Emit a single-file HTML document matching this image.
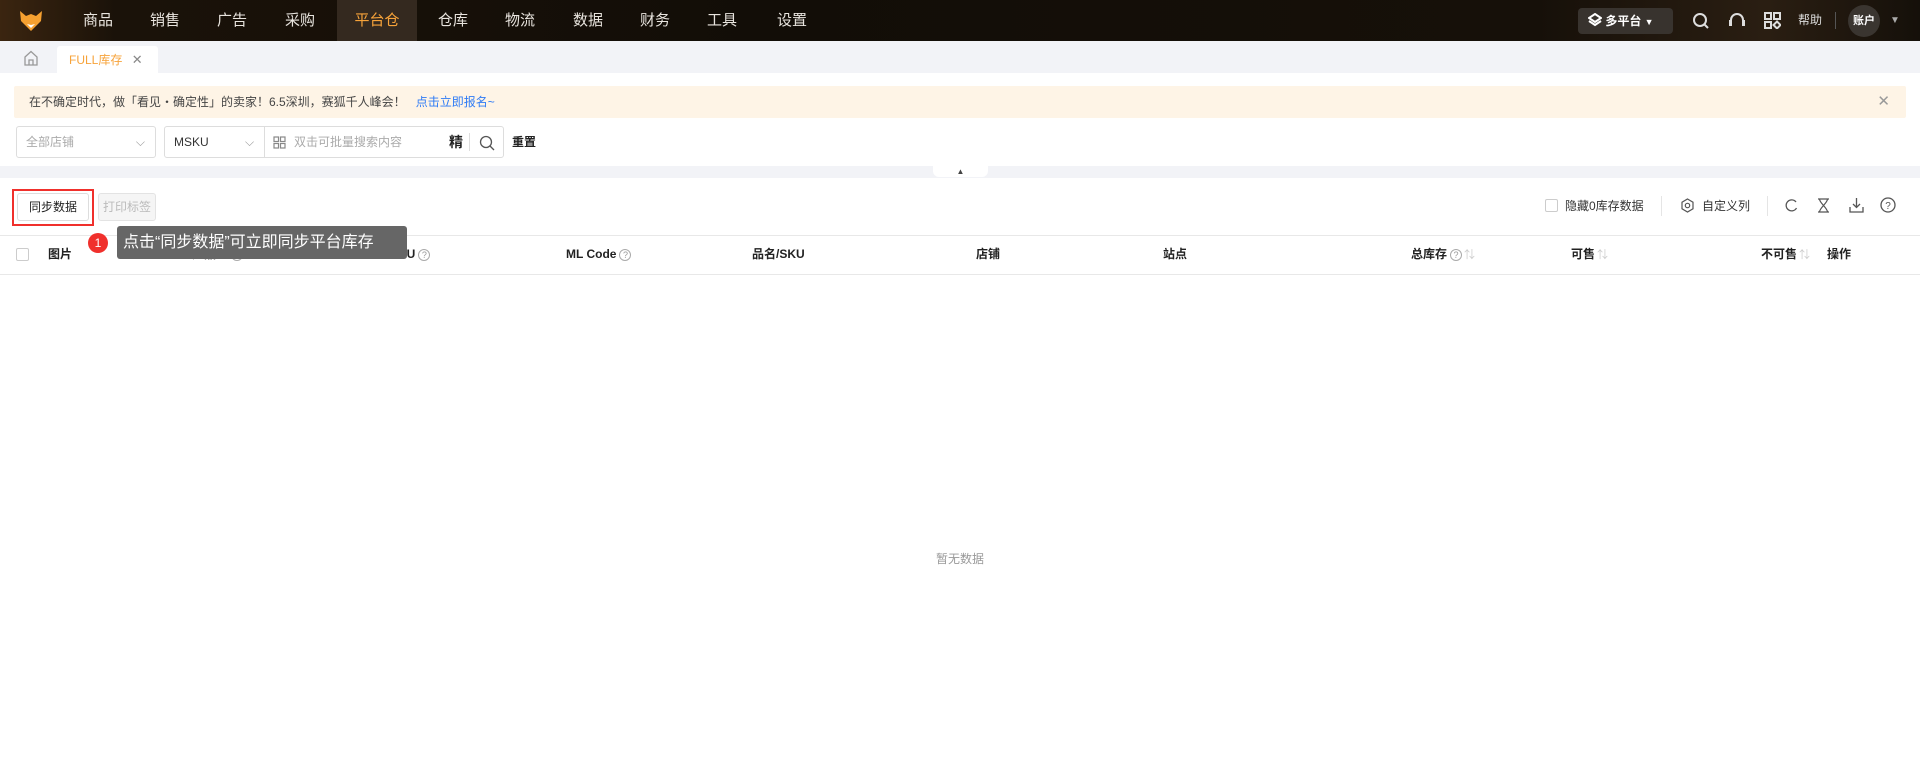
<!DOCTYPE html>
<html><head><meta charset="utf-8"><style>
*{box-sizing:border-box;margin:0;padding:0}
body{width:1920px;height:767px;background:#fff;font-family:"Liberation Sans","Noto Sans CJK SC",sans-serif;position:relative;overflow:hidden;color:#222}
.abs{position:absolute}
.nav{left:0;top:0;width:1920px;height:41px;background:linear-gradient(90deg,#3b2510 0%,#1a1209 6%,#120d07 40%,#161009 80%,#2a1e12 92%,#15100a 100%)}
.nav .it{position:absolute;top:0;height:41px;line-height:41px;color:#e8e4de;font-size:15px;transform:translateX(-50%)}
.tabbar{left:0;top:41px;width:1920px;height:32px;background:#f2f3f7}
.hd{font-size:12px;font-weight:bold;color:#222;top:246px;line-height:16px;white-space:nowrap}
.q{display:inline-block;width:12px;height:12px;border:1px solid #aaa;border-radius:50%;font-size:9px;line-height:10px;text-align:center;color:#999;font-weight:normal;vertical-align:middle;margin-left:3px}
.s{color:#ccc;font-weight:normal;font-size:11px;margin-left:2px}
</style></head><body>
<div class="abs nav">
 <svg class="abs" style="left:19px;top:10px" width="24" height="22" viewBox="0 0 24 22"><path d="M1 1 L7 6 L12 4 L17 6 L23 1 L22 11 L12 21 L2 11Z" fill="#f5a030"/><path d="M8 14 L12 18 L16 14 L12 15Z" fill="#fff"/></svg>
 <div class="it" style="left:98px">商品</div><div class="it" style="left:165px">销售</div><div class="it" style="left:232px">广告</div><div class="it" style="left:300px">采购</div>
 <div class="abs" style="left:337px;top:0;width:80px;height:41px;background:#34291f"></div>
 <div class="it" style="left:377px;color:#f7a33a">平台仓</div>
 <div class="it" style="left:453px">仓库</div><div class="it" style="left:520px">物流</div><div class="it" style="left:588px">数据</div><div class="it" style="left:655px">财务</div><div class="it" style="left:722px">工具</div><div class="it" style="left:792px">设置</div>
 <div class="abs" style="left:1578px;top:8px;width:95px;height:26px;background:#38332e;border-radius:4px;color:#fff;font-size:12px;font-weight:bold;line-height:26px;padding-left:10px">
  <svg width="14" height="14" viewBox="0 0 14 14" style="vertical-align:-2px"><path d="M7 1L13 5 7 9 1 5Z M1 8 L7 12 13 8" fill="none" stroke="#fff" stroke-width="2"/></svg>&nbsp;多平台&nbsp;<span style="font-size:9px">▼</span></div>
 <svg class="abs" style="left:1692px;top:12px" width="18" height="18" viewBox="0 0 18 18"><circle cx="8" cy="8" r="6" fill="none" stroke="#ddd" stroke-width="2"/><path d="M12.5 12.5L16 16" stroke="#ddd" stroke-width="2"/></svg>
 <svg class="abs" style="left:1728px;top:11px" width="18" height="20" viewBox="0 0 18 20"><path d="M3 12V9a6 6 0 0 1 12 0v3" fill="none" stroke="#ddd" stroke-width="2"/><rect x="1" y="9" width="3" height="6" fill="#ddd"/><rect x="14" y="9" width="3" height="6" fill="#ddd"/></svg>
 <svg class="abs" style="left:1764px;top:12px" width="17" height="17" viewBox="0 0 17 17"><g fill="none" stroke="#ddd" stroke-width="2"><rect x="1" y="1" width="6" height="6"/><rect x="10" y="1" width="6" height="6"/><rect x="1" y="10" width="6" height="6"/><path d="M13 9.5L16.5 13 13 16.5 9.5 13Z"/></g></svg>
 <div class="abs" style="left:1798px;top:0;line-height:41px;color:#ddd;font-size:12px">帮助</div>
 <div class="abs" style="left:1835px;top:12px;width:1px;height:17px;background:#555"></div>
 <div class="abs" style="left:1848px;top:5px;width:32px;height:32px;border-radius:50%;background:#3a3530;color:#fff;font-size:11px;font-weight:bold;line-height:32px;text-align:center">账户</div>
 <div class="abs" style="left:1890px;top:0;line-height:41px;color:#aaa;font-size:10px">▼</div>
</div>
<div class="abs tabbar">
 <svg class="abs" style="left:23px;top:9px" width="16" height="16" viewBox="0 0 16 16"><path d="M2 7L8 1.5 14 7V15H2Z M6 15V10H10V15" fill="none" stroke="#999" stroke-width="1.3"/></svg>
 <div class="abs" style="left:57px;top:5px;width:101px;height:27px;background:#fff;border-radius:3px 3px 0 0;font-size:12px;color:#f7a33a;line-height:27px;padding-left:12px">FULL库存 <span style="color:#888;margin-left:6px;font-size:13px">✕</span></div>
</div>
<div class="abs" style="left:14px;top:86px;width:1892px;height:32px;background:#fef4e6;border-radius:2px;font-size:12px;line-height:32px;padding-left:15px;color:#444">在不确定时代，做「看见・确定性」的卖家！6.5深圳，赛狐千人峰会！&nbsp;&nbsp;&nbsp;<span style="color:#2f7bf5">点击立即报名~</span>
 <span style="position:absolute;right:16px;top:0;color:#999;font-size:15px">✕</span></div>
<div class="abs" style="left:16px;top:126px;width:140px;height:32px;border:1px solid #ddd;border-radius:3px;font-size:12px;color:#aaa;line-height:30px;padding-left:9px">全部店铺<span style="position:absolute;right:10px;color:#999">⌵</span></div>
<div class="abs" style="left:164px;top:126px;width:340px;height:32px;border:1px solid #ddd;border-radius:3px;font-size:12px;line-height:30px">
 <span style="position:absolute;left:9px;color:#333">MSKU</span><span style="position:absolute;left:80px;color:#999">⌵</span>
 <div class="abs" style="left:99px;top:0;width:1px;height:30px;background:#ddd"></div>
 <svg class="abs" style="left:108px;top:9px" width="13" height="13" viewBox="0 0 13 13"><g fill="none" stroke="#888" stroke-width="1.2"><rect x="1" y="1" width="4.5" height="4.5"/><rect x="7.5" y="1" width="4.5" height="4.5"/><rect x="1" y="7.5" width="4.5" height="4.5"/><rect x="7.5" y="7.5" width="4.5" height="4.5"/></g></svg>
 <span style="position:absolute;left:129px;color:#aaa">双击可批量搜索内容</span>
 <span style="position:absolute;left:284px;color:#222;font-size:14px;font-weight:bold">精</span>
 <div class="abs" style="left:304px;top:6px;width:1px;height:18px;background:#ddd"></div>
 <svg class="abs" style="left:314px;top:8px" width="16" height="16" viewBox="0 0 16 16"><circle cx="7" cy="7" r="5.5" fill="none" stroke="#555" stroke-width="1.3"/><path d="M11 11L15 15" stroke="#555" stroke-width="1.3"/></svg>
</div>
<div class="abs" style="left:512px;top:126px;line-height:32px;font-size:12px;font-weight:bold">重置</div>
<div class="abs" style="left:0;top:166px;width:1920px;height:12px;background:#f2f3f7"></div>
<div class="abs" style="left:933px;top:166px;width:55px;height:11px;background:#fff;border-radius:0 0 6px 6px;text-align:center;font-size:8px;line-height:11px;color:#444">▲</div>
<div class="abs" style="left:12px;top:189px;width:82px;height:37px;border:2px solid #f0302c"></div>
<div class="abs" style="left:17px;top:193px;width:72px;height:28px;border:1px solid #ddd;border-radius:3px;font-size:12px;line-height:26px;text-align:center">同步数据</div>
<div class="abs" style="left:98px;top:193px;width:58px;height:28px;border:1px solid #e3e3e3;background:#f5f5f5;border-radius:3px;font-size:12px;line-height:26px;text-align:center;color:#bbb">打印标签</div>
<div class="abs" style="left:1545px;top:199px;width:13px;height:13px;border:1px solid #ccc;border-radius:2px"></div>
<div class="abs" style="left:1565px;top:197px;font-size:12px;color:#333">隐藏0库存数据</div>
<div class="abs" style="left:1661px;top:196px;width:1px;height:20px;background:#e5e5e5"></div>
<svg class="abs" style="left:1680px;top:198px" width="15" height="15" viewBox="0 0 15 15"><path d="M7.5 1L13 4.2V10.8L7.5 14 2 10.8V4.2Z" fill="none" stroke="#555" stroke-width="1.2"/><circle cx="7.5" cy="7.5" r="2.2" fill="none" stroke="#555" stroke-width="1.2"/></svg>
<div class="abs" style="left:1702px;top:197px;font-size:12px;color:#333">自定义列</div>
<div class="abs" style="left:1767px;top:196px;width:1px;height:20px;background:#e5e5e5"></div>
<svg class="abs" style="left:1784px;top:198px" width="15" height="15" viewBox="0 0 15 15"><path d="M12 4A5.5 5.5 0 1 0 12.5 10" fill="none" stroke="#555" stroke-width="1.3"/></svg>
<svg class="abs" style="left:1817px;top:198px" width="13" height="15" viewBox="0 0 13 15"><path d="M1 1H12M1 14H12M2.5 1C2.5 5 10.5 10 10.5 14M10.5 1C10.5 5 2.5 10 2.5 14" fill="none" stroke="#555" stroke-width="1.2"/></svg>
<svg class="abs" style="left:1849px;top:197px" width="15" height="16" viewBox="0 0 15 16"><path d="M7.5 1V10M4 7L7.5 10.5 11 7M1 10V15H14V10" fill="none" stroke="#555" stroke-width="1.3"/></svg>
<svg class="abs" style="left:1880px;top:197px" width="16" height="16" viewBox="0 0 16 16"><circle cx="8" cy="8" r="7" fill="none" stroke="#555" stroke-width="1.3"/><text x="8" y="12" font-size="10" text-anchor="middle" fill="#555" font-family="Liberation Sans">?</text></svg>
<div class="abs" style="left:0;top:235px;width:1920px;height:1px;background:#e8e8e8"></div>
<div class="abs" style="left:0;top:274px;width:1920px;height:1px;background:#e8e8e8"></div>
<div class="abs" style="left:16px;top:248px;width:13px;height:13px;border:1px solid #ccc;border-radius:2px"></div>
<div class="abs hd" style="left:48px">图片</div>
<div class="abs hd" style="left:192px">产品ID<span class="q">?</span></div>
<div class="abs hd" style="left:380px">MSKU<span class="q">?</span></div>
<div class="abs hd" style="left:566px">ML Code<span class="q">?</span></div>
<div class="abs hd" style="left:752px">品名/SKU</div>
<div class="abs hd" style="left:976px">店铺</div>
<div class="abs hd" style="left:1163px">站点</div>
<div class="abs hd" style="left:1411px">总库存<span class="q">?</span><span class="s">⇅</span></div>
<div class="abs hd" style="left:1571px">可售<span class="s">⇅</span></div>
<div class="abs hd" style="left:1761px">不可售<span class="s">⇅</span></div>
<div class="abs hd" style="left:1827px">操作</div>
<div class="abs" style="left:88px;top:233px;width:20px;height:20px;border-radius:50%;background:#f0302c;color:#fff;font-size:12px;line-height:20px;text-align:center">1</div>
<div class="abs" style="left:117px;top:226px;width:290px;height:33px;background:#666;border-radius:3px;color:#fff;font-size:16px;line-height:33px;padding-left:6px">点击“同步数据”可立即同步平台库存</div>
<div class="abs" style="left:0;top:550px;width:1920px;text-align:center;font-size:12px;color:#999">暂无数据</div>
</body></html>
